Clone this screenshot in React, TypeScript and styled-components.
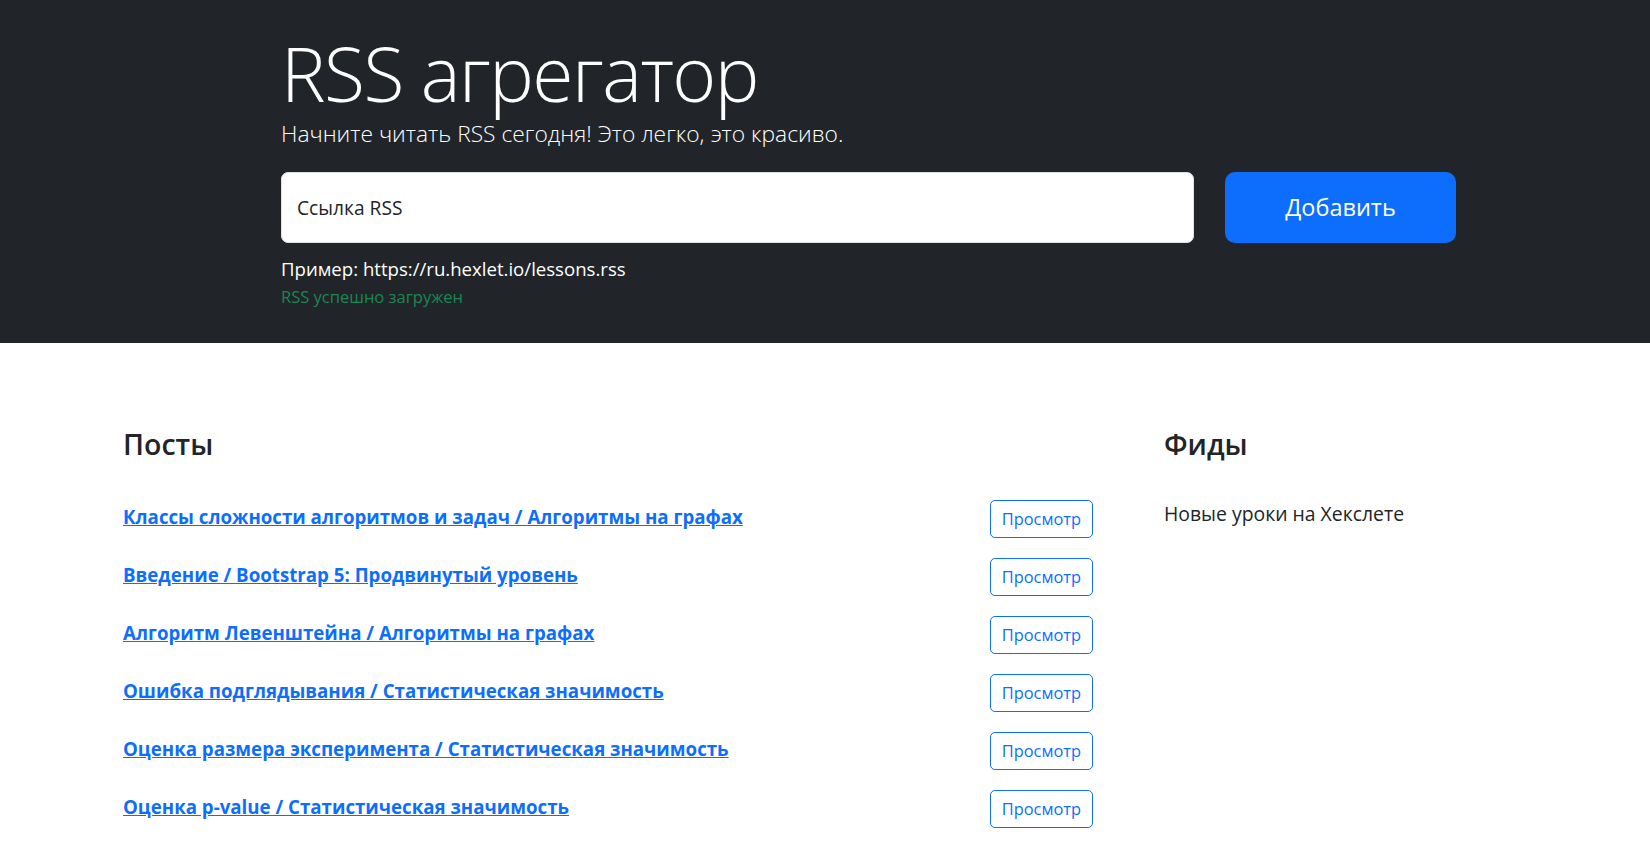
import React from "react";
import styled, { createGlobalStyle } from "styled-components";

const GlobalStyle = createGlobalStyle`
  html, body { margin: 0; padding: 0; }
  body {
    font-family: "Open Sans", "Noto Sans", sans-serif;
    font-size: 20px;
    line-height: 1.5;
    color: #212529;
    background: #fff;
  }
  * { box-sizing: border-box; }
`;

const Hero = styled.section`
  background: #212529;
  padding: 28px 0 33px 281px;
`;

const HeroInner = styled.div`
  width: 1175px;
  color: #fff;
`;

const Title = styled.h1`
  margin: 0;
  font-size: 75px;
  font-weight: 300;
  letter-spacing: -1.5px;
  line-height: 90px;
`;

const Lead = styled.p`
  margin: 0 0 22px;
  font-size: 22.8px;
  font-weight: 300;
  line-height: 32px;
`;

const FormRow = styled.form`
  display: flex;
  gap: 31px;
  height: 71px;
`;

const Floating = styled.div`
  position: relative;
  flex: 1;
`;

const UrlInput = styled.input`
  width: 100%;
  height: 100%;
  border: 1px solid #dee2e6;
  border-radius: 7px;
  background: #fff;
  padding: 26px 15px 8px;
  font: inherit;
  color: #212529;
  outline: none;
`;

const FloatLabel = styled.label`
  position: absolute;
  top: 21px;
  left: 16px;
  font-size: 19.2px;
  line-height: 30px;
  color: #212529;
  pointer-events: none;
`;

const AddButton = styled.button`
  width: 231px;
  border: 0;
  border-radius: 10px;
  background: #0d6efd;
  color: #fff;
  font-family: inherit;
  font-size: 23.5px;
  line-height: 1.5;
  cursor: pointer;
`;

const Example = styled.p`
  margin: 11px 0 0;
  font-size: 18.6px;
  line-height: 30px;
  color: #fff;
`;

const Feedback = styled.p`
  margin: 0;
  font-size: 16.5px;
  line-height: 26px;
  color: #198754;
`;

const Content = styled.section`
  display: grid;
  grid-template-columns: 1010px 1fr;
  column-gap: 31px;
  padding: 63px 0 0 103px;
`;

const Card = styled.div`
  display: flex;
  flex-direction: column;
`;

const CardTitle = styled.h2`
  margin: 20px 20px 30px;
  font-size: 28.5px;
  font-weight: 600;
  line-height: 36px;
`;

const List = styled.ul`
  list-style: none;
  margin: 0;
  padding: 0;
`;

const PostItem = styled.li`
  display: flex;
  justify-content: space-between;
  align-items: flex-start;
  padding: 10px 20px;
`;

const PostLink = styled.a`
  font-size: 18.7px;
  font-weight: 700;
  color: #0d6efd;
  text-decoration: underline;
  line-height: 30px;
`;

const ViewButton = styled.button`
  height: 38px;
  margin: -2px 0 2px;
  padding: 0 11px;
  border: 1px solid #0d6efd;
  border-radius: 5px;
  background: #fff;
  color: #0d6efd;
  font-family: inherit;
  font-size: 16.4px;
  line-height: 1.5;
  cursor: pointer;
`;

const FeedItem = styled.li`
  padding: 10px 20px;
`;

const FeedTitle = styled.h3`
  margin: 0;
  font-size: 19.4px;
  font-weight: 500;
  line-height: 24px;
`;

const posts = [
  "Классы сложности алгоритмов и задач / Алгоритмы на графах",
  "Введение / Bootstrap 5: Продвинутый уровень",
  "Алгоритм Левенштейна / Алгоритмы на графах",
  "Ошибка подглядывания / Статистическая значимость",
  "Оценка размера эксперимента / Статистическая значимость",
  "Оценка p-value / Статистическая значимость",
];

export default function App() {
  return (
    <>
      <GlobalStyle />
      <Hero>
        <HeroInner>
          <Title>RSS агрегатор</Title>
          <Lead>Начните читать RSS сегодня! Это легко, это красиво.</Lead>
          <FormRow onSubmit={(e) => e.preventDefault()}>
            <Floating>
              <UrlInput id="url-input" aria-label="url" />
              <FloatLabel htmlFor="url-input">Ссылка RSS</FloatLabel>
            </Floating>
            <AddButton type="submit">Добавить</AddButton>
          </FormRow>
          <Example>Пример: https://ru.hexlet.io/lessons.rss</Example>
          <Feedback>RSS успешно загружен</Feedback>
        </HeroInner>
      </Hero>
      <Content>
        <Card>
          <CardTitle>Посты</CardTitle>
          <List>
            {posts.map((p) => (
              <PostItem key={p}>
                <PostLink href="#">{p}</PostLink>
                <ViewButton type="button">Просмотр</ViewButton>
              </PostItem>
            ))}
          </List>
        </Card>
        <Card>
          <CardTitle>Фиды</CardTitle>
          <List>
            <FeedItem>
              <FeedTitle>Новые уроки на Хекслете</FeedTitle>
            </FeedItem>
          </List>
        </Card>
      </Content>
    </>
  );
}
